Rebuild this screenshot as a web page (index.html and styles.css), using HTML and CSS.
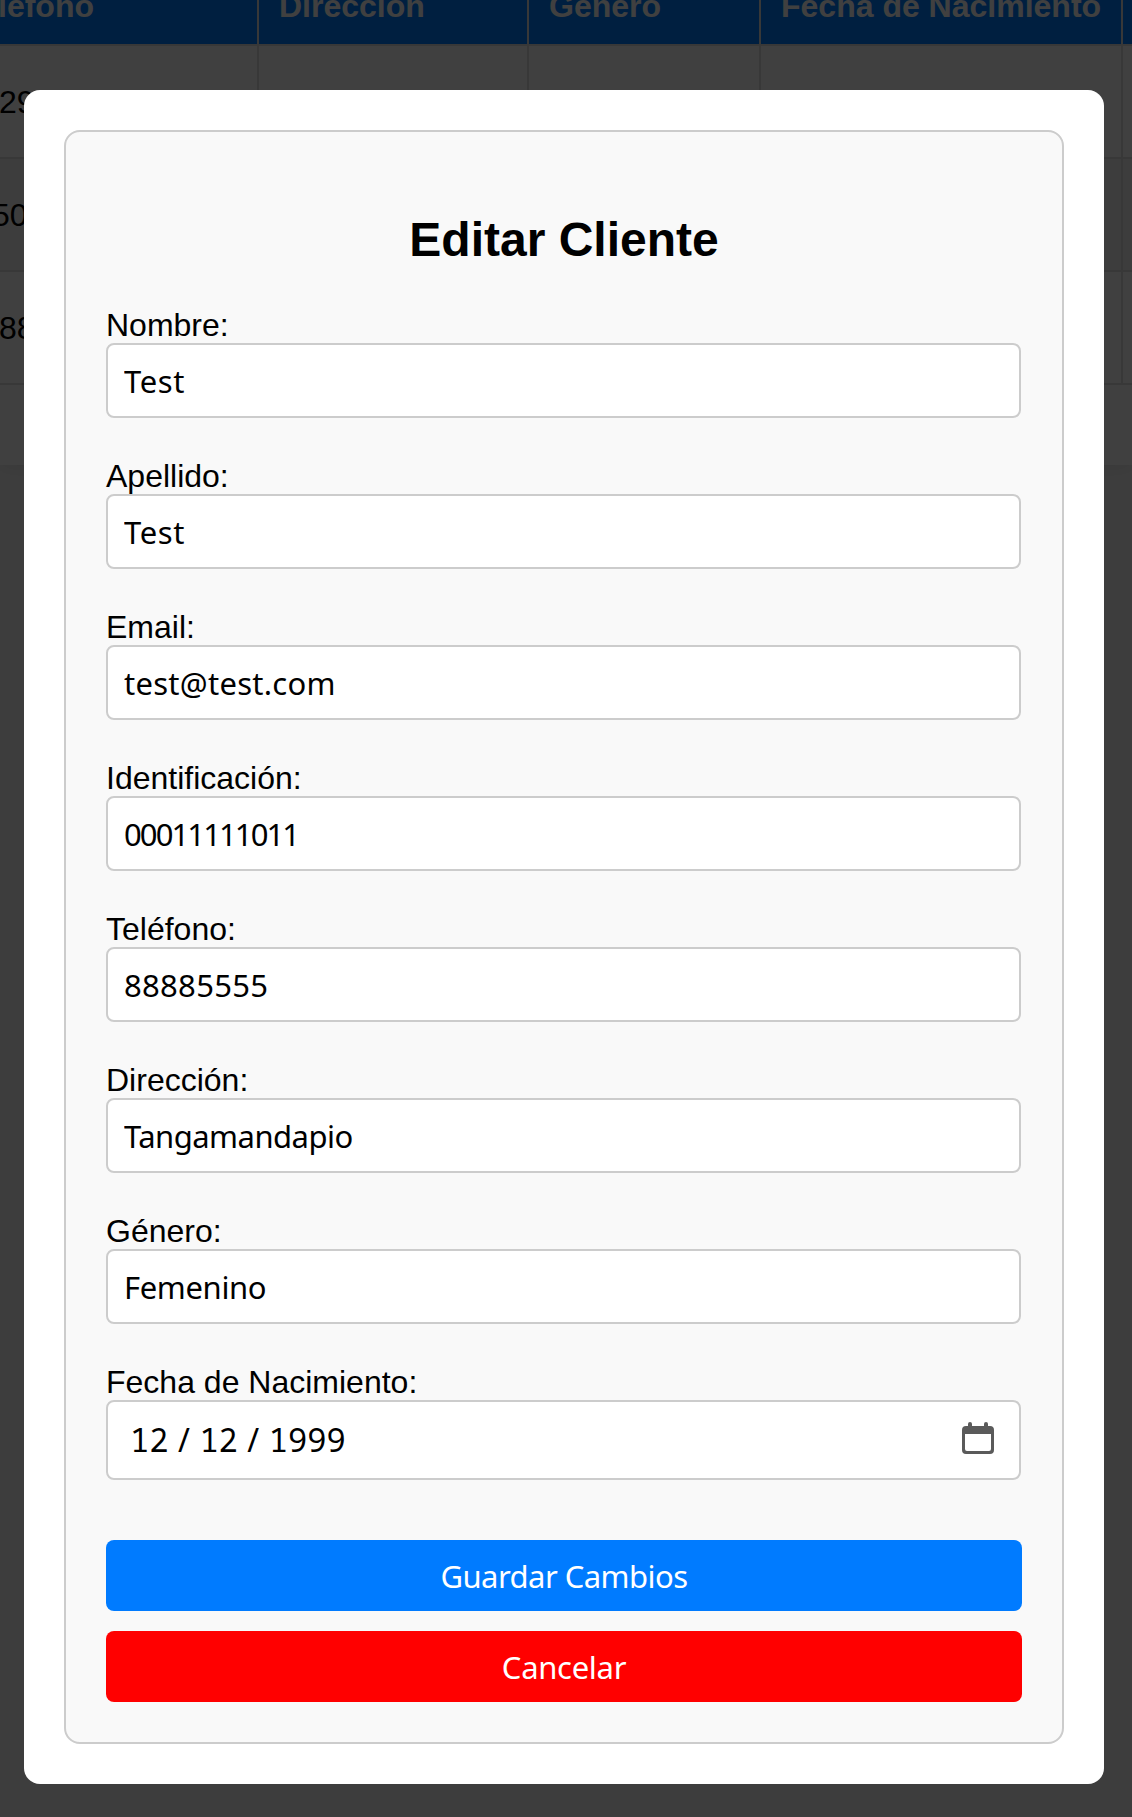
FILE: index.html
```html
<!DOCTYPE html>
<html lang="es">
<head>
<meta charset="UTF-8">
<title>Editar Cliente</title>
<link rel="stylesheet" href="styles.css">
</head>
<body>
<div class="page">
  <div class="card">
    <table class="clients">
      <colgroup><col class="c-phone"><col class="c-address"><col class="c-gender"><col class="c-birth"><col class="c-actions"></colgroup>
      <thead>
        <tr><th class="cut-head">léfono</th><th>Dirección</th><th>Género</th><th>Fecha de Nacimiento</th><th></th></tr>
      </thead>
      <tbody>
        <tr><td class="cut">29</td><td></td><td></td><td></td><td></td></tr>
        <tr><td class="cut cut-more">50</td><td></td><td></td><td></td><td></td></tr>
        <tr><td class="cut">88</td><td></td><td></td><td></td><td></td></tr>
      </tbody>
    </table>
  </div>
</div>
<div class="overlay">
  <div class="modal">
    <form class="form">
      <h2 class="title">Editar Cliente</h2>
      <label class="label" for="nombre">Nombre:</label>
      <input class="input name" id="nombre" value="Test">
      <label class="label" for="apellido">Apellido:</label>
      <input class="input name" id="apellido" value="Test">
      <label class="label" for="email">Email:</label>
      <input class="input email" id="email" value="test@test.com">
      <label class="label" for="ident">Identificación:</label>
      <input class="input ident" id="ident" value="00011111011">
      <label class="label" for="tel">Teléfono:</label>
      <input class="input phone" id="tel" value="88885555">
      <label class="label" for="dir">Dirección:</label>
      <input class="input address" id="dir" value="Tangamandapio">
      <label class="label" for="genero">Género:</label>
      <input class="input gender" id="genero" value="Femenino">
      <span class="label">Fecha de Nacimiento:</span>
      <div class="input date">
        <div class="date-text"><span class="num">12</span><span class="sep">/</span><span class="num">12</span><span class="sep">/</span><span class="num">1999</span></div>
        <svg class="calendar" viewBox="0 0 32 32" fill="#5a5a5a"><path fill-rule="evenodd" d="M6 4V2a2 2 0 0 1 4 0v2h12V2a2 2 0 0 1 4 0v2h2a4 4 0 0 1 4 4v20a4 4 0 0 1-4 4H4a4 4 0 0 1-4-4V8a4 4 0 0 1 4-4zM3 12v15a2 2 0 0 0 2 2h22a2 2 0 0 0 2-2V12z"/></svg>
      </div>
      <button class="btn save" type="button">Guardar Cambios</button>
      <button class="btn cancel" type="button">Cancelar</button>
    </form>
  </div>
</div>
</body>
</html>
```
FILE: styles.css
```css
* { box-sizing: border-box; }
body {
  margin: 0;
  background: #f4f4f4;
  color: #000;
  font: 32px "Liberation Sans", Arial, sans-serif;
}
.page {
  height: 1817px;
  overflow: hidden;
}
.card {
  height: 465px;
  background: #fff;
  box-shadow: 0 0 20px rgba(0, 0, 0, .1);
}
.clients {
  width: 1393px;
  height: 385px;
  table-layout: fixed;
  border-spacing: 0;
}
.c-phone { width: 259px; }
.c-address { width: 270px; }
.c-gender { width: 232px; }
.c-birth { width: 362px; }
.c-actions { width: 270px; }
th, td {
  padding: 0 18px 0 20px;
  border-right: 2px solid #ddd;
  border-bottom: 2px solid #ddd;
  text-align: left;
  white-space: nowrap;
  line-height: 36px;
}
th {
  height: 46px;
  padding-bottom: 32px;
  vertical-align: bottom;
  background: #007bff;
  color: #fff;
  line-height: 12px;
}
td { height: 113px; }
tbody tr:nth-child(even) td { background: #f2f2f2; }
.cut-head { padding-left: 0; text-indent: -2px; }
.cut { padding-left: 0; text-indent: -1px; }
.cut-more { text-indent: -8px; }
.overlay {
  position: fixed;
  inset: 0;
  padding: 90px 28px 33px 24px;
  background: rgba(0, 0, 0, .75);
}
.modal {
  width: 1080px;
  height: 1694px;
  padding: 40px;
  border-radius: 16px;
  background: #fff;
}
.form {
  display: flex;
  flex-direction: column;
  padding: 40px;
  border: 2px solid #ccc;
  border-radius: 16px;
  background: #f9f9f9;
}
.title {
  margin: 40px 0;
  font-size: 48px;
  line-height: 55px;
  text-align: center;
}
.label { line-height: 36px; }
.input {
  width: 915px;
  height: 75px;
  margin: 0 0 40px;
  padding: 0 16px;
  border: 2px solid #ccc;
  border-radius: 8px;
  background: #fff;
  color: #000;
  font: 31px "Noto Sans", sans-serif;
}
.name { letter-spacing: .6px; }
.email { letter-spacing: .27px; }
.ident { letter-spacing: -1.9px; }
.phone { letter-spacing: .3px; }
.address { letter-spacing: -.53px; }
.gender { letter-spacing: -.36px; }
.date {
  display: flex;
  align-items: center;
  justify-content: space-between;
  height: 80px;
  margin-bottom: 60px;
  padding: 0 25px 4px 22px;
}
.date-text { display: flex; padding-top: 3px; }
.num { font: 32px/40px "Noto Sans Mono", "DejaVu Sans Mono", monospace; }
.sep {
  width: 31px;
  font: 32px/40px "Noto Sans", sans-serif;
  text-align: center;
}
.calendar { width: 32px; height: 32px; }
.btn {
  height: 71px;
  padding: 0;
  border: 0;
  border-radius: 8px;
  color: #fff;
  font: 31px "Noto Sans", sans-serif;
}
.save { margin-bottom: 20px; background: #007bff; letter-spacing: -.55px; }
.cancel { background: #f00; letter-spacing: -.3px; }
```
